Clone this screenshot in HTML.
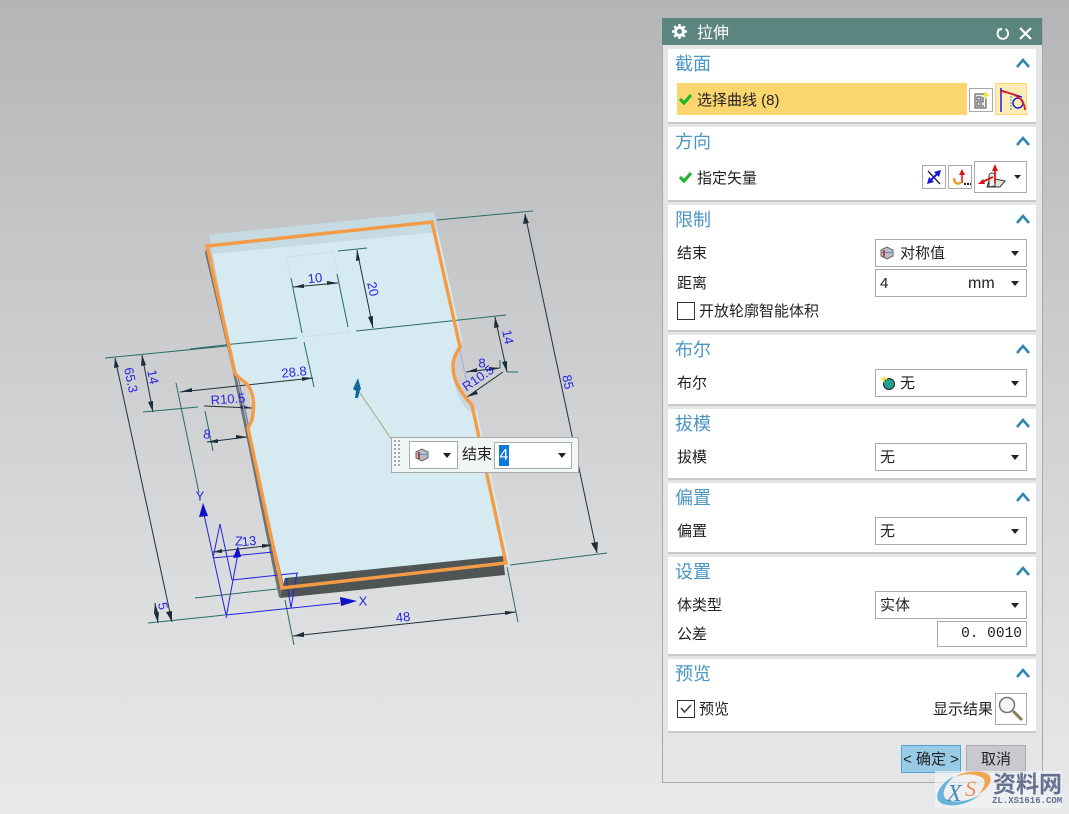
<!DOCTYPE html>
<html><head><meta charset="utf-8"><style>
html,body{margin:0;padding:0;width:1069px;height:814px;overflow:hidden}
body{position:relative;background:linear-gradient(180deg,#b4b5b7 0,#c9cacc 300px,#dcddde 600px,#e8e9ea 814px);font-family:"Liberation Sans","Noto Sans CJK SC",sans-serif;font-size:15px;color:#222}
.a{position:absolute;white-space:nowrap}
#panel{position:absolute;left:662px;top:18px;width:379px;height:764px;border:1px solid #a9a9a9;border-top:0;background:#e4e5e6}
#title{position:absolute;left:662px;top:18px;width:380px;height:27px;background:#5c8580}
.sec{position:absolute;left:668px;width:368px;background:#fff;border-bottom:2px solid #c9c9c9;box-sizing:border-box}
.h{position:absolute;left:675px;font-size:18px;color:#4a95c4;line-height:24px;margin-top:-1px}
.l{position:absolute;line-height:20px;white-space:nowrap;margin-top:1px}
.dd{position:absolute;left:875px;width:150px;height:26px;border:1px solid #a9a9a9;background:#fff;line-height:27px}
.dd i{position:absolute;right:7px;top:11px;width:0;height:0;border-left:4px solid transparent;border-right:4px solid transparent;border-top:5px solid #222}
.dd span{position:absolute;left:4px}
.btn{position:absolute;box-sizing:border-box;border:1px solid #a9a9a9;background:#fff}
svg{position:absolute;overflow:visible}
.cv{left:1016px;width:14px;height:10px}
</style></head><body>

<svg style="left:0;top:0" width="660" height="814" viewBox="0 0 660 814">
<!-- body -->
<path d="M207 246L205 253 232 368 245 430 279 598 285 590 250 430 238 375Z" fill="#6f7475"/>
<path d="M236 364C248 370 257 384 256 402L253 416 249 385 236 376Z" fill="#676c6d"/>
<path d="M209 235L434 212 438 232 462 340 458 350 453 366 453 380 472 405 477 412 510 563 285 590 248 430 253 413 248 385 235 373Z" fill="#d5eaf1"/>
<path d="M209 235L434 212 438 232 213 254Z" fill="#c5dae1"/>
<path d="M453 375C455 392 462 408 474 415L472 405C460 392 454 382 453 375Z" fill="#c3dae1"/>
<path d="M285 578L503 556 505 575 280 598Z" fill="#4f5455"/>
<path d="M286 257L333 252 349 332 303 337Z" fill="none" stroke="#cde1ea" stroke-width="1.2"/>

<!-- teal lines -->
<g stroke="#2a6c66" stroke-width="1" fill="none">
<path d="M437 220L533 211M510 565L607 553M105 358L227 346M190 349L233 344M233 344L297 338M356 331L506 315M143 412L198 407M176 383L199 493M304 342L314 387M205 411L213 451M195 598L277 589M148 623L225 615M285 600L294 645M507 567L518 622M338 251L367 248M291 278L302 333M337 274L348 327M507 372L518 372M500 360L500 368"/>
</g>
<!-- dark dims -->
<g stroke="#20303a" stroke-width="1" fill="none">
<path d="M525 214L597 553M115 358L172 622M142 355L153 412M180 392L313 378M204 406L252 408M207 442L247 437M155 603L158 623M293 636L516 612M495 317L507 372M503 372L467 397M466 372L500 368M293 287L338 283M357 250L373 328M213 552L273 545"/>
</g>
<g fill="#1d2d3a">
<path d="M525 214L523 224 529 223ZM597 553L591 543 598 542ZM115 358L114 368 119 367ZM172 622L166 612 172 611ZM142 355L141 366 146 365ZM153 412L148 402 153 401ZM180 392L192 388 192 392ZM313 378L302 377 302 381ZM252 408L241 405 241 409ZM247 437L236 435 236 439ZM207 442L218 439 218 443ZM155 603L154 613 158 612ZM158 623L154 613 159 612ZM293 636L304 632 304 637ZM516 612L505 611 505 615ZM495 317L494 328 499 327ZM507 372L502 362 507 361ZM467 397L476 390 478 394ZM466 372L477 368 477 372ZM500 368L489 367 489 371ZM293 287L304 284 304 288ZM338 283L327 281 327 285ZM357 250L356 261 360 260ZM373 328L368 317 373 316ZM213 552L222 549 222 553ZM273 545L262 544 262 548Z"/>
</g>
<!-- light purple -->
<path d="M460 350L467 383M237 377L248 428" stroke="#a9afe0" stroke-width="1.2" fill="none"/>
<!-- blue sketch -->
<g stroke="#2323e0" stroke-width="1" fill="none">
<path d="M203 510L226 615M220 524L232 580M238 553L226 618M213 558L220 524M213 558L273 552M232 580L298 573M226 615L340 603M297 573L291 608 286 578"/>
</g>
<path d="M203 503L199 517 208 516ZM357 601L340 597 341 606ZM238 546L233 558 241 557Z" fill="#1010c8"/>
<!-- orange -->
<path d="M207 246L432 222 460 347C456 354 453 358 453 366 453 380 460 392 472 405L506 563 282 588 248 428C250 424 253 420 253 413 255 400 252 392 248 385 243 380 238 378 235 373Z" fill="none" stroke="#f69b45" stroke-width="3.4" stroke-linejoin="miter"/>
<!-- arrow -->
<path d="M358 390L392 440" stroke="#a8a97a" stroke-width="1" fill="none"/>
<path d="M358 378L353 389 356 391 355 398 358 398 360 390 361 389Z" fill="#0f6a9e"/>
<!-- labels -->
<g font-family="Liberation Sans, sans-serif" font-size="13" fill="#2626e6" text-anchor="middle" dominant-baseline="central" stroke="none">
<text x="315" y="278" transform="rotate(-6 315 278)">10</text>
<text x="373" y="289" transform="rotate(78 373 289)">20</text>
<text x="294" y="372" transform="rotate(-6 294 372)">28.8</text>
<text x="228" y="399" transform="rotate(-4 228 399)">R10.5</text>
<text x="207" y="434" transform="rotate(8 207 434)">8</text>
<text x="153" y="377" transform="rotate(78 153 377)">14</text>
<text x="131" y="380" transform="rotate(78 131 380)">65.3</text>
<text x="163" y="606" transform="rotate(78 163 606)">5</text>
<text x="200" y="496">Y</text>
<text x="239" y="541">Z</text>
<text x="249" y="541" transform="rotate(-6 249 541)">13</text>
<text x="363" y="601">X</text>
<text x="403" y="617" transform="rotate(-6 403 617)">48</text>
<text x="508" y="337" transform="rotate(78 508 337)">14</text>
<text x="568" y="382" transform="rotate(78 568 382)">85</text>
<text x="478" y="378" transform="rotate(-35 478 378)">R10.5</text>
<text x="482" y="363">8</text>
</g>
</svg>

<!-- float bar -->
<div class="a" style="left:391px;top:437px;width:186px;height:34px;border:1px solid #a9a9a9;background:#f0f5f5"></div>
<svg style="left:394px;top:440px" width="8" height="30"><g fill="#a9a9a9"><rect x="0" y="0" width="2" height="2"/><rect x="4" y="0" width="2" height="2"/><rect x="0" y="4" width="2" height="2"/><rect x="4" y="4" width="2" height="2"/><rect x="0" y="8" width="2" height="2"/><rect x="4" y="8" width="2" height="2"/><rect x="0" y="12" width="2" height="2"/><rect x="4" y="12" width="2" height="2"/><rect x="0" y="16" width="2" height="2"/><rect x="4" y="16" width="2" height="2"/><rect x="0" y="20" width="2" height="2"/><rect x="4" y="20" width="2" height="2"/><rect x="0" y="24" width="2" height="2"/><rect x="4" y="24" width="2" height="2"/></g></svg>
<div class="btn" style="left:409px;top:441px;width:49px;height:28px"></div>
<svg style="left:415px;top:448px" width="14" height="14"><path d="M1 4L7 1 13 4V10L7 13 1 10Z" fill="#b9bcc0" stroke="#666"/><path d="M1 6.5H13" stroke="#5a8fd0"/><path d="M4 4V11" stroke="#e01010" stroke-width="1.5"/></svg>
<svg style="left:443px;top:453px" width="9" height="5"><path d="M0 0H8L4 5Z" fill="#222"/></svg>
<div class="l" style="left:462px;top:444px">结束</div>
<div class="btn" style="left:494px;top:442px;width:78px;height:27px"></div>
<div class="a" style="left:499px;top:445px;width:10px;height:21px;background:#0a78d7;color:#fff;font-size:16px;line-height:21px;text-align:center">4</div>
<svg style="left:558px;top:453px" width="9" height="5"><path d="M0 0H8L4 5Z" fill="#222"/></svg>

<!-- panel -->
<div id="panel"></div>
<div id="title"></div>
<svg style="left:672px;top:24px" width="15" height="15" viewBox="0 0 15 15"><circle cx="7.5" cy="7.5" r="4" fill="none" stroke="#fff" stroke-width="3"/><path d="M7.5 0V3M7.5 12V15M0 7.5H3M12 7.5H15M2.2 2.2L4.2 4.2M10.8 10.8L12.800 12.800M2.2 12.800L4.2 10.8M10.8 4.2L12.800 2.2" stroke="#fff" stroke-width="2.4"/></svg>
<div class="l" style="left:697px;top:23px;color:#fff;font-size:16px">拉伸</div>
<svg style="left:996px;top:27px" width="14" height="14" viewBox="0 0 14 14"><path d="M3.500 2.500A5.300 5.300 0 1 0 9.500 2M1.500 2.500H5V1" fill="none" stroke="#fff" stroke-width="1.800"/></svg>
<svg style="left:1019px;top:27px" width="13" height="13"><path d="M1 1L12 12M12 1L1 12" stroke="#fff" stroke-width="2.2"/></svg>

<div class="sec" style="top:49px;height:75px"></div>
<div class="sec" style="top:127px;height:75px"></div>
<div class="sec" style="top:205px;height:127px"></div>
<div class="sec" style="top:335px;height:71px"></div>
<div class="sec" style="top:409px;height:71px"></div>
<div class="sec" style="top:483px;height:71px"></div>
<div class="sec" style="top:557px;height:99px"></div>
<div class="sec" style="top:659px;height:74px"></div>

<div class="h" style="top:53px">截面</div>
<div class="h" style="top:131px">方向</div>
<div class="h" style="top:209px">限制</div>
<div class="h" style="top:339px">布尔</div>
<div class="h" style="top:413px">拔模</div>
<div class="h" style="top:487px">偏置</div>
<div class="h" style="top:561px">设置</div>
<div class="h" style="top:663px">预览</div>

<svg class="cv" style="top:58px" viewBox="0 0 14 10"><path d="M1 9L7 2 13 9" fill="none" stroke="#2e86b5" stroke-width="2.6"/></svg>
<svg class="cv" style="top:136px" viewBox="0 0 14 10"><path d="M1 9L7 2 13 9" fill="none" stroke="#2e86b5" stroke-width="2.6"/></svg>
<svg class="cv" style="top:214px" viewBox="0 0 14 10"><path d="M1 9L7 2 13 9" fill="none" stroke="#2e86b5" stroke-width="2.6"/></svg>
<svg class="cv" style="top:344px" viewBox="0 0 14 10"><path d="M1 9L7 2 13 9" fill="none" stroke="#2e86b5" stroke-width="2.6"/></svg>
<svg class="cv" style="top:418px" viewBox="0 0 14 10"><path d="M1 9L7 2 13 9" fill="none" stroke="#2e86b5" stroke-width="2.6"/></svg>
<svg class="cv" style="top:492px" viewBox="0 0 14 10"><path d="M1 9L7 2 13 9" fill="none" stroke="#2e86b5" stroke-width="2.6"/></svg>
<svg class="cv" style="top:566px" viewBox="0 0 14 10"><path d="M1 9L7 2 13 9" fill="none" stroke="#2e86b5" stroke-width="2.6"/></svg>
<svg class="cv" style="top:668px" viewBox="0 0 14 10"><path d="M1 9L7 2 13 9" fill="none" stroke="#2e86b5" stroke-width="2.6"/></svg>

<!-- section 1 -->
<div class="a" style="left:677px;top:83px;width:290px;height:32px;background:#fbd56e"></div>
<svg style="left:679px;top:93px" width="13" height="12"><path d="M1 6L5 10 12 2" fill="none" stroke="#1fb52f" stroke-width="3.2"/></svg>
<div class="l" style="left:697px;top:90px">选择曲线 (8)</div>
<div class="btn" style="left:969px;top:88px;width:24px;height:24px"></div>
<svg style="left:973px;top:91px" width="17" height="19"><rect x="2" y="3" width="11" height="14" fill="#eee" stroke="#444"/><path d="M4 6H8V9H4ZM10 6V11H4V15H11M6 13H9" fill="none" stroke="#444"/><path d="M13 0L14.500 3 17 4 14.500 5 13 8 11.500 5 9 4 11.500 3Z" fill="#f5e23a"/></svg>
<div class="btn" style="left:995px;top:83px;width:32px;height:32px;background:#fcedb8;border-color:#fbd56e"></div>
<svg style="left:998px;top:87px" width="26" height="26"><path d="M3 25V1M2 3L24 10" fill="none" stroke="#1414d8" stroke-width="1.400"/><path d="M13 6V23" stroke="#20a0a0" stroke-dasharray="2 1"/><circle cx="20" cy="16" r="5" fill="none" stroke="#1414d8" stroke-width="1.400"/><path d="M2 4C12 6 26 8 27 23" fill="none" stroke="#d82020" stroke-width="1.800"/></svg>

<!-- section 2 -->
<svg style="left:679px;top:171px" width="13" height="12"><path d="M1 6L5 10 12 2" fill="none" stroke="#1fb52f" stroke-width="3.200"/></svg>
<div class="l" style="left:697px;top:168px">指定矢量</div>
<div class="btn" style="left:922px;top:165px;width:24px;height:24px"></div>
<svg style="left:926px;top:169px" width="16" height="16"><path d="M2 2L14 15" stroke="#222" stroke-width="1.300"/><path d="M12 4L4 12" stroke="#1414d8" stroke-width="2"/><path d="M15 1L8 3 13 8ZM1 15L8 13 3 8Z" fill="#1414d8"/></svg>
<div class="btn" style="left:948px;top:165px;width:24px;height:24px"></div>
<svg style="left:951px;top:168px" width="20" height="18"><path d="M11 1L8 7H14Z" fill="#d81414"/><path d="M11 7V15" stroke="#d81414" stroke-width="1.500"/><path d="M3 10C3 16 8 17 10 14" fill="none" stroke="#ef9a2e" stroke-width="2.400"/><path d="M13 16H20" stroke="#222" stroke-width="2" stroke-dasharray="2 1"/></svg>
<div class="btn" style="left:974px;top:161px;width:53px;height:32px"></div>
<svg style="left:977px;top:164px" width="30" height="27"><path d="M10 23L12 17V23ZM18 15L28 17 23 23H11Z" fill="#dfe8dc" stroke="#333"/><path d="M12 23V12C12 8 18 8 18 12V22Z" fill="#e9f3e6" stroke="#333"/><path d="M18 19V5" stroke="#d81414" stroke-width="1.800"/><path d="M18 0L15 7H21Z" fill="#d81414"/><path d="M5 18L16 13" stroke="#d81414" stroke-width="1.800"/><path d="M1 20L8 20 6 15Z" fill="#d81414"/></svg>
<svg style="left:1014px;top:175px" width="8" height="4"><path d="M0 0H7L3.500 4Z" fill="#222"/></svg>

<!-- section 3 -->
<div class="l" style="left:677px;top:243px">结束</div>
<div class="dd" style="top:239px"><i></i><span style="left:24px">对称值</span></div>
<svg style="left:880px;top:246px" width="14" height="14"><path d="M1 4L7 1 13 4V10L7 13 1 10Z" fill="#b9bcc0" stroke="#666"/><path d="M1 6.500H13" stroke="#5a8fd0"/><path d="M4 4V11" stroke="#e01010" stroke-width="1.500"/></svg>
<div class="l" style="left:677px;top:273px">距离</div>
<div class="dd" style="top:269px"><i></i><span>4</span><span style="left:92px;font-size:16px">mm</span></div>
<div class="a" style="left:677px;top:302px;width:16px;height:16px;border:1px solid #333;background:#fff"></div>
<div class="l" style="left:699px;top:301px">开放轮廓智能体积</div>

<!-- section 4 -->
<div class="l" style="left:677px;top:373px">布尔</div>
<div class="dd" style="top:369px"><i></i><span style="left:24px">无</span></div>
<svg style="left:880px;top:375px" width="16" height="15"><circle cx="9" cy="9" r="5.500" fill="#1fa090" stroke="#222"/><path d="M4 0L5 3 8 4 5 5 4 8 3 5 0 4 3 3Z" fill="#f3e62c"/></svg>

<!-- section 5 -->
<div class="l" style="left:677px;top:447px">拔模</div>
<div class="dd" style="top:443px"><i></i><span>无</span></div>

<!-- section 6 -->
<div class="l" style="left:677px;top:521px">偏置</div>
<div class="dd" style="top:517px"><i></i><span>无</span></div>

<!-- section 7 -->
<div class="l" style="left:677px;top:595px">体类型</div>
<div class="dd" style="top:591px"><i></i><span>实体</span></div>
<div class="l" style="left:677px;top:624px">公差</div>
<div class="btn" style="left:937px;top:621px;width:90px;height:26px;text-align:right;padding-right:4px;line-height:25px;font-family:'Liberation Mono',monospace;font-size:14.500px;white-space:pre">0. 0010</div>

<!-- section 8 -->
<div class="a" style="left:677px;top:700px;width:16px;height:16px;border:1px solid #333;background:#fff"></div>
<svg style="left:680px;top:703px" width="12" height="11"><path d="M1 5L4.500 9 11 2" fill="none" stroke="#444" stroke-width="1.600"/></svg>
<div class="l" style="left:699px;top:699px">预览</div>
<div class="l" style="left:933px;top:699px">显示结果</div>
<div class="btn" style="left:995px;top:693px;width:32px;height:32px"></div>
<svg style="left:998px;top:696px" width="26" height="26"><circle cx="9" cy="9" r="7.500" fill="#f2f4f5" stroke="#777" stroke-width="1.500"/><path d="M15 15L24 24" stroke="#8a7a5a" stroke-width="3"/></svg>

<!-- buttons -->
<div class="a" style="left:901px;top:745px;width:58px;height:26px;border:1px solid #4fa3d4;background:#9acbe6;text-align:center;line-height:28px">&lt; 确定 &gt;</div>
<div class="a" style="left:966px;top:745px;width:58px;height:26px;border:1px solid #aaa;background:#c8c9cc;text-align:center;line-height:28px">取消</div>

<!-- watermark -->
<div class="a" style="left:935px;top:771px;width:127px;height:37px;background:rgba(240,241,243,.75)"></div>
<svg style="left:935px;top:770px" width="60" height="40" viewBox="0 0 60 40"><path d="M20 6C6 12 0 24 3 30 7 38 30 38 46 24 34 32 16 34 10 28 6 22 12 12 20 6Z" fill="#6ab2d8"/><path d="M20 7C30 0 48 0 54 5 58 10 54 18 44 24 50 16 52 10 46 7 38 3 28 4 20 7Z" fill="#f0a64e"/><text x="12" y="31" font-family="Liberation Serif, serif" font-style="italic" font-size="24" fill="#4a8bc0">X</text><text x="30" y="26" font-family="Liberation Serif, serif" font-style="italic" font-size="22" fill="#ea8f55">S</text></svg>
<div class="a" style="left:993px;top:770px;font-size:23px;line-height:28px;font-weight:bold;color:#66708f">资料网</div>
<div class="a" style="left:992px;top:796px;font-family:'Liberation Mono',monospace;font-size:9px;font-weight:bold;line-height:10px;color:#66708f">ZL.XS1616.COM</div>
</body></html>
